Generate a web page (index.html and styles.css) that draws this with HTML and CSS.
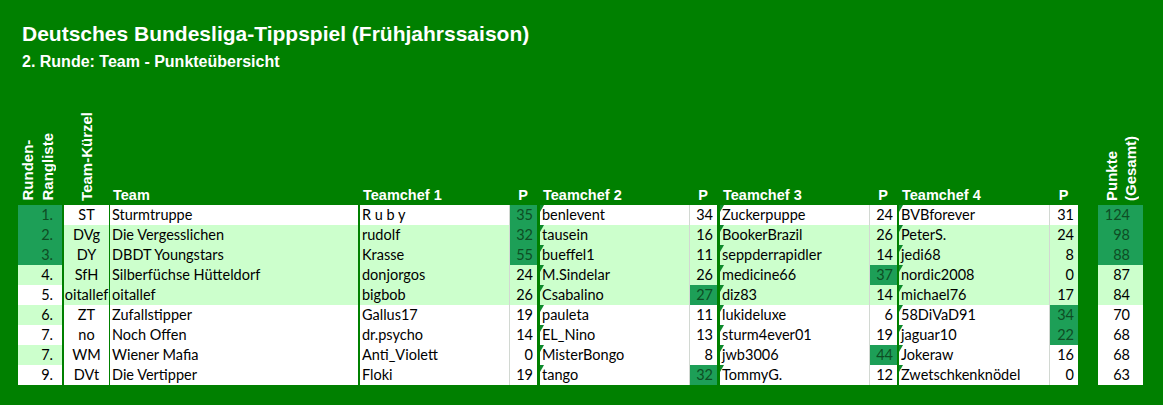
FILE: index.html
```html
<!DOCTYPE html>
<html lang="de">
<head>
<meta charset="utf-8">
<title>Deutsches Bundesliga-Tippspiel</title>
<link rel="stylesheet" href="styles.css">
</head>
<body>
<div class="page">
  <h1 class="title">Deutsches Bundesliga-Tippspiel (Frühjahrssaison)</h1>
  <h2 class="subtitle">2. Runde: Team - Punkteübersicht</h2>

  <div class="sheet">
    <div class="head">
      <div class="hv h-rank"><span class="vert">Runden-<br>Rangliste</span></div>
      <div class="hv h-abbr"><span class="vert">Team-Kürzel</span></div>
      <div class="hc h-team">Team</div>
      <div class="hc h-tc2">Teamchef 1</div>
      <div class="hp">P</div>
      <div class="hc h-tc3">Teamchef 2</div>
      <div class="hp">P</div>
      <div class="hc h-tc3">Teamchef 3</div>
      <div class="hp">P</div>
      <div class="hc h-tc2">Teamchef 4</div>
      <div class="hp">P</div>
      <div class="hv h-tot"><span class="vert">Punkte<br>(Gesamt)</span></div>
    </div>

    <div class="row wh">
      <div class="c-rank hi">1.</div><div class="c-abbr">ST</div><div class="c-team">Sturmtruppe</div>
      <div class="c-tc b2">R u b y</div><div class="c-p hi">35</div>
      <div class="c-tc b3 mark">benlevent</div><div class="c-p">34</div>
      <div class="c-tc b3 mark">Zuckerpuppe</div><div class="c-p">24</div>
      <div class="c-tc b2 mark">BVBforever</div><div class="c-p">31</div>
      <div class="c-tot hi">124</div>
    </div>
    <div class="row lt">
      <div class="c-rank hi">2.</div><div class="c-abbr">DVg</div><div class="c-team">Die Vergesslichen</div>
      <div class="c-tc b2">rudolf</div><div class="c-p hi">32</div>
      <div class="c-tc b3 mark">tausein</div><div class="c-p">16</div>
      <div class="c-tc b3 mark">BookerBrazil</div><div class="c-p">26</div>
      <div class="c-tc b2 mark">PeterS.</div><div class="c-p">24</div>
      <div class="c-tot hi">98</div>
    </div>
    <div class="row lt">
      <div class="c-rank hi">3.</div><div class="c-abbr">DY</div><div class="c-team">DBDT Youngstars</div>
      <div class="c-tc b2">Krasse</div><div class="c-p hi">55</div>
      <div class="c-tc b3 mark">bueffel1</div><div class="c-p">11</div>
      <div class="c-tc b3 mark">seppderrapidler</div><div class="c-p">14</div>
      <div class="c-tc b2 mark">jedi68</div><div class="c-p">8</div>
      <div class="c-tot hi">88</div>
    </div>
    <div class="row lt">
      <div class="c-rank lt">4.</div><div class="c-abbr">SfH</div><div class="c-team">Silberfüchse Hütteldorf</div>
      <div class="c-tc b2">donjorgos</div><div class="c-p">24</div>
      <div class="c-tc b3 mark">M.Sindelar</div><div class="c-p">26</div>
      <div class="c-tc b3 mark">medicine66</div><div class="c-p hi">37</div>
      <div class="c-tc b2 mark">nordic2008</div><div class="c-p">0</div>
      <div class="c-tot lt">87</div>
    </div>
    <div class="row lt">
      <div class="c-rank wh">5.</div><div class="c-abbr">oitallef</div><div class="c-team">oitallef</div>
      <div class="c-tc b2">bigbob</div><div class="c-p">26</div>
      <div class="c-tc b3 mark">Csabalino</div><div class="c-p hi">27</div>
      <div class="c-tc b3 mark">diz83</div><div class="c-p">14</div>
      <div class="c-tc b2 mark">michael76</div><div class="c-p">17</div>
      <div class="c-tot lt">84</div>
    </div>
    <div class="row wh">
      <div class="c-rank lt">6.</div><div class="c-abbr">ZT</div><div class="c-team">Zufallstipper</div>
      <div class="c-tc b2">Gallus17</div><div class="c-p">19</div>
      <div class="c-tc b3 mark">pauleta</div><div class="c-p">11</div>
      <div class="c-tc b3 mark">lukideluxe</div><div class="c-p">6</div>
      <div class="c-tc b2 mark">58DiVaD91</div><div class="c-p hi">34</div>
      <div class="c-tot wh">70</div>
    </div>
    <div class="row wh">
      <div class="c-rank wh">7.</div><div class="c-abbr">no</div><div class="c-team">Noch Offen</div>
      <div class="c-tc b2">dr.psycho</div><div class="c-p">14</div>
      <div class="c-tc b3 mark">EL_Nino</div><div class="c-p">13</div>
      <div class="c-tc b3 mark">sturm4ever01</div><div class="c-p">19</div>
      <div class="c-tc b2 mark">jaguar10</div><div class="c-p hi">22</div>
      <div class="c-tot wh">68</div>
    </div>
    <div class="row wh">
      <div class="c-rank lt">7.</div><div class="c-abbr">WM</div><div class="c-team">Wiener Mafia</div>
      <div class="c-tc b2">Anti_Violett</div><div class="c-p">0</div>
      <div class="c-tc b3 mark">MisterBongo</div><div class="c-p">8</div>
      <div class="c-tc b3 mark">jwb3006</div><div class="c-p hi">44</div>
      <div class="c-tc b2 mark">Jokeraw</div><div class="c-p">16</div>
      <div class="c-tot wh">68</div>
    </div>
    <div class="row wh">
      <div class="c-rank wh">9.</div><div class="c-abbr">DVt</div><div class="c-team">Die Vertipper</div>
      <div class="c-tc b2">Floki</div><div class="c-p">19</div>
      <div class="c-tc b3 mark">tango</div><div class="c-p hi">32</div>
      <div class="c-tc b3 mark">TommyG.</div><div class="c-p">12</div>
      <div class="c-tc b2 mark">Zwetschkenknödel</div><div class="c-p">0</div>
      <div class="c-tot wh">63</div>
    </div>
  </div>
</div>
</body>
</html>
```
FILE: styles.css
```css
html, body {
  margin: 0;
  padding: 0;
}
body {
  background: #008000;
  width: 1163px;
  height: 405px;
  overflow: hidden;
}
.page {
  padding: 22px 0 0 18px;
}
.title {
  margin: 0 0 0 4px;
  font: bold 21px/24px "Liberation Sans", Arial, sans-serif;
  color: #ffffff;
}
.subtitle {
  margin: 7px 0 0 4px;
  font: bold 16px/18px "Liberation Sans", Arial, sans-serif;
  color: #ffffff;
}

.head,
.row {
  display: grid;
  grid-template-columns: 44px 47px 249px 151px 28px 152px 28px 152px 28px 152px 29px 65px;
}

/* header */
.head {
  height: 134px;
  align-items: end;
  color: #ffffff;
  font: bold 14.5px/17px "Liberation Sans", Arial, sans-serif;
}
.hc {
  padding-bottom: 1px;
  white-space: nowrap;
}
.h-team { padding-left: 4px; }
.h-tc2 { padding-left: 5px; }
.h-tc3 { padding-left: 6px; }
.hp {
  padding-bottom: 1px;
  text-align: center;
}
.hv {
  display: flex;
  align-items: flex-end;
  padding-bottom: 4px;
  font-size: 15px;
}
.vert {
  writing-mode: vertical-rl;
  transform: rotate(180deg);
  white-space: nowrap;
}
.h-rank {
  justify-content: flex-start;
  padding-left: 0;
  line-height: 20px;
}
.h-abbr {
  justify-content: center;
  padding-left: 2px;
  line-height: 17px;
}
.h-tot {
  margin-left: 20px;
  justify-content: center;
  line-height: 19px;
}

/* body rows */
.row {
  height: 20px;
  font: 14.5px/20px Lato, "Noto Sans", sans-serif;
  color: #000000;
}
.row > div {
  white-space: nowrap;
  background-clip: padding-box;
}
.row.wh > div { background-color: #ffffff; }
.row.lt > div { background-color: #ccffcc; }
.row > div.wh { background-color: #ffffff; }
.row > div.lt { background-color: #ccffcc; }
.row > div.hi {
  background-color: #1d9f57;
  color: #0d4d24;
}

.c-rank {
  text-align: right;
  padding-right: 9px;
}
.c-abbr {
  border-left: 2px solid #008000;
  text-align: center;
}
.c-team {
  border-left: 1px solid #008000;
  padding-left: 2px;
}
.c-tc {
  position: relative;
  padding-left: 2px;
}
.b2 { border-left: 2px solid #008000; }
.b3 { border-left: 3px solid #008000; }
.c-p {
  border-left: 1px solid #d2d8d2;
  text-align: right;
  padding-right: 4px;
}
.c-tot {
  margin-left: 20px;
  text-align: right;
  padding-right: 13px;
}
.mark::before {
  content: "";
  position: absolute;
  left: 0;
  top: 0;
  width: 0;
  height: 0;
  border-top: 7px solid #0e8a2c;
  border-right: 4px solid transparent;
}
```
